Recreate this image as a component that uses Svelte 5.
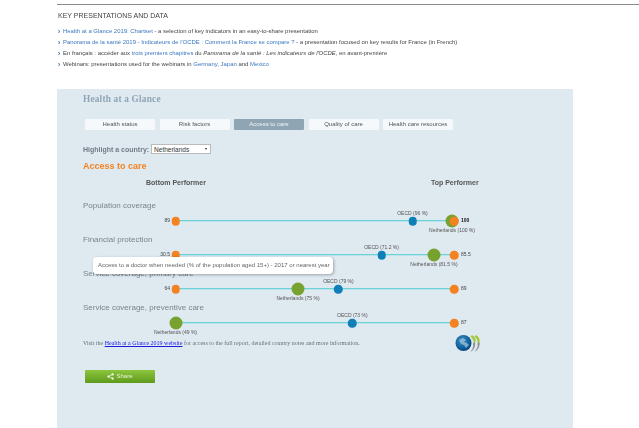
<script>
  const tabs = ['Health status', 'Risk factors', 'Access to care', 'Quality of care', 'Health care resources'];
  const rows = [
    { title: 'Population coverage', low: '89', high: '100', bold: true, oecd: 85.1, oecdLabel: 'OECD (96 %)', nl: 99.3, nlLabel: 'Netherlands (100 %)' },
    { title: 'Financial protection', low: '30.5', high: '85.5', oecd: 74, oecdLabel: 'OECD (71.2 %)', nl: 92.8, nlLabel: 'Netherlands (81.5 %)' },
    { title: 'Service coverage, primary care', low: '64', high: '89', oecd: 58.5, oecdLabel: 'OECD (79 %)', nl: 44, nlLabel: 'Netherlands (75 %)' },
    { title: 'Service coverage, preventive care', low: '', high: '87', oecd: 63.5, oecdLabel: 'OECD (73 %)', nl: 0, nlLabel: 'Netherlands (49 %)', hideLow: true }
  ];
</script>

<div class="page">
  <section class="intro">
    <h2>KEY PRESENTATIONS AND DATA</h2>
    <ul>
      <li><a href="#a">Health at a Glance 2019: Chartset</a> - a selection of key indicators in an easy-to-share presentation</li>
      <li><a href="#a">Panorama de la santé 2019 - Indicateurs de l'OCDE : Comment la France se compare ?</a> - a presentation focused on key results for France (in French)</li>
      <li>En français : accéder aux <a href="#a">trois premiers chapitres</a> du <em>Panorama de la santé : Les indicateurs de l'OCDE</em>, en avant-première</li>
      <li>Webinars: presentations used for the webinars in <a href="#a">Germany</a>, <a href="#a">Japan</a> and <a href="#a">Mexico</a></li>
    </ul>
  </section>

  <section class="panel">
    <h1>Health at a Glance</h1>
    <nav class="tabs">
      {#each tabs as t, i}
        <button class="tab" class:active={i === 2}>{t}</button>
      {/each}
    </nav>
    <div class="highlight">
      <span>Highlight a country:</span>
      <div class="select">Netherlands<i></i></div>
    </div>
    <h3>Access to care</h3>
    <div class="performers"><b>Bottom Performer</b><b>Top Performer</b></div>

    <div class="chart">
      {#each rows as r}
        <div class="row">
          <div class="rtitle">{r.title}</div>
          <div class="track">
            <div class="line"></div>
            <span class="dot oecd" style="left:{r.oecd}%"></span>
            <span class="lbl above" style="left:{r.oecd}%">{r.oecdLabel}</span>
            <span class="dot nl" style="left:{r.nl}%"></span>
            <span class="lbl below" style="left:{r.nl}%">{r.nlLabel}</span>
            {#if !r.hideLow}
              <span class="dot end" style="left:0"></span>
              <span class="val low">{r.low}</span>
            {/if}
            <span class="dot end" style="left:100%"></span>
            <span class="val high" class:strong={r.bold}>{r.high}</span>
          </div>
        </div>
      {/each}
      <div class="tooltip">Access to a doctor when needed (% of the population aged 15+) - 2017 or nearest year</div>
    </div>

    <div class="foot">
      <p>Visit the <a href="#a">Health at a Glance 2019 website</a> for access to the full report, detailed country notes and more information.</p>
      <svg class="logo" viewBox="0 0 26 18" width="26" height="18" aria-hidden="true">
        <defs>
          <radialGradient id="g" cx="0.4" cy="0.35" r="0.7">
            <stop offset="0" stop-color="#3f8fc4"/><stop offset="0.7" stop-color="#0f5c98"/><stop offset="1" stop-color="#0a3f70"/>
          </radialGradient>
        </defs>
        <circle cx="8.500" cy="9" r="8" fill="url(#g)"/>
        <path d="M4 6 8 4l3 2-2 2 3 1 2 2-3 3-2-3-3-1z" fill="#9cc3dd" opacity=".75"/>
        <path d="M17 1q5 3 3 8l-1.500 1.500q1-5-3-8z" fill="#a4c639"/>
        <path d="M21 1q5 3 3 8l-1.500 1.500q1-5-3-8z" fill="#a4c639"/>
        <path d="M20 8q1 5-3 9l-1.500.5q3.500-4 2.500-8z" fill="#8a8f94"/>
        <path d="M24.500 8q1 5-3.500 9l-1.500.5q4-4 3-8z" fill="#8a8f94"/>
      </svg>
    </div>

    <button class="share">
      <svg viewBox="0 0 10 10" width="7" height="7" aria-hidden="true">
        <path d="M8 2 2 5l6 3" fill="none" stroke="#fff" stroke-width="1"/>
        <circle cx="8" cy="2" r="1.600" fill="#fff"/><circle cx="2" cy="5" r="1.600" fill="#fff"/><circle cx="8" cy="8" r="1.600" fill="#fff"/>
      </svg>
      Share
    </button>
  </section>
</div>

<style>
  :global(body) { margin: 0; background: #fff; overflow: hidden; }
  .page { width: 639px; height: 428px; overflow: hidden; font-family: "Liberation Sans", Arial, sans-serif; color: #444; padding-top: 4px; box-sizing: border-box; filter: blur(.4px); }
  .intro { margin-left: 57px; border-top: 1px solid #8a8a8a; height: 85px; padding-left: 1px; box-sizing: border-box; }
  h2 { margin: 6px 0 0; font-size: 7px; line-height: 9px; font-weight: 400; color: #444; }
  ul { list-style: none; margin: 6px 0 0; padding: 0; }
  li { font-size: 5.950px; line-height: 11px; color: #444; padding-left: 5px; position: relative; white-space: nowrap; }
  li::before { content: '›'; position: absolute; left: 0; top: 0; color: #2a6a9e; font-weight: 700; font-size: 6.500px; }
  .intro a { color: #3a78bf; text-decoration: none; }

  .panel { margin-left: 57px; width: 516px; height: 339px; background: #dfe9f0; padding: 5px 0 0 26px; box-sizing: border-box; }
  h1 { margin: 0; font: 700 9.300px/11px "Liberation Serif", serif; color: #8fa5b4; letter-spacing: .2px; }
  .tabs { display: flex; gap: 4.500px; margin: 14px 0 0 2px; }
  .tab { width: 70px; height: 11px; padding: 0; border: 0; background: #f6f9fc; color: #555; font: 6px/11px "Liberation Sans", sans-serif; border-radius: 1px; white-space: nowrap; }
  .tab.active { background: #8fa5b4; color: #f2f5f7; }
  .highlight { display: flex; align-items: center; gap: 2px; margin-top: 14px; font-size: 7px; font-weight: 700; color: #6f7d86; height: 10px; }
  .select { position: relative; width: 60px; height: 10px; background: #fff; border: .5px solid #bbb; box-sizing: border-box; font: 400 6.500px/9px "Liberation Sans", sans-serif; color: #333; padding-left: 2px; }
  .select i { position: absolute; right: 3px; top: 3px; border: 1.800px solid transparent; border-top: 2.500px solid #222; border-bottom: 0; }
  h3 { margin: 7px 0 0; font: 700 9px/11px "Liberation Sans", sans-serif; color: #f58220; }
  .performers { display: flex; margin: 7px 0 0 0; height: 8px; font-size: 7px; line-height: 8px; color: #555; white-space: nowrap; }
  .performers b:first-child { margin-left: 63px; }
  .performers b:last-child { margin-left: 225px; }

  .chart { position: relative; margin: 12px 0 0 0; }
  .row { height: 34px; position: relative; }
  .rtitle { font-size: 8px; line-height: 10px; color: #7a8389; padding-top: 2px; height: 12px; white-space: nowrap; }
  .track { position: absolute; left: 92.500px; top: 21px; width: 278.500px; height: 0; }
  .line { position: absolute; left: 0; right: 0; top: 0; height: 1px; background: #6fd0d8; box-shadow: 0 1px 0 #b8e5e9; }
  .dot { position: absolute; border-radius: 50%; transform: translate(-50%, -50%); top: 1px; }
  .end { width: 8.500px; height: 8.500px; background: #f58220; }
  .oecd { width: 8.500px; height: 8.500px; background: #0f7fb8; }
  .nl { width: 13px; height: 13px; background: #78a22f; }
  .lbl { position: absolute; transform: translateX(-50%); font-size: 5px; line-height: 6px; color: #555; white-space: nowrap; }
  .above { top: -10px; }
  .below { top: 7px; }
  .val { position: absolute; font-size: 5px; line-height: 6px; color: #444; top: -3.500px; }
  .low { right: calc(100% + 5.500px); }
  .high { left: calc(100% + 7px); }
  .strong { font-weight: 700; color: #111; }
  .tooltip { position: absolute; left: 10px; top: 58px; width: 240px; height: 17px; box-sizing: border-box; background: #fff; border-radius: 4px; box-shadow: 1px 1px 3px rgba(0,0,0,.3); font-size: 6px; line-height: 17px; color: #666; padding-left: 5px; white-space: nowrap; }

  .foot { display: flex; align-items: center; justify-content: space-between; width: 398px; margin-top: -1px; font: 6px/9px "Liberation Serif", serif; color: #66727a; height: 18px; }
  .foot p { margin: 0; white-space: nowrap; }
  .foot a { color: #1a1ae0; }
  .share { display: flex; align-items: center; justify-content: center; gap: 2px; margin: 18px 0 0 2px; width: 70px; height: 13px; padding: 0; border: 0; border-radius: 1px; background: linear-gradient(#8cc63f, #5f9a1c); color: #e8f3d6; font: 6px/13px "Liberation Sans", sans-serif; }
</style>
